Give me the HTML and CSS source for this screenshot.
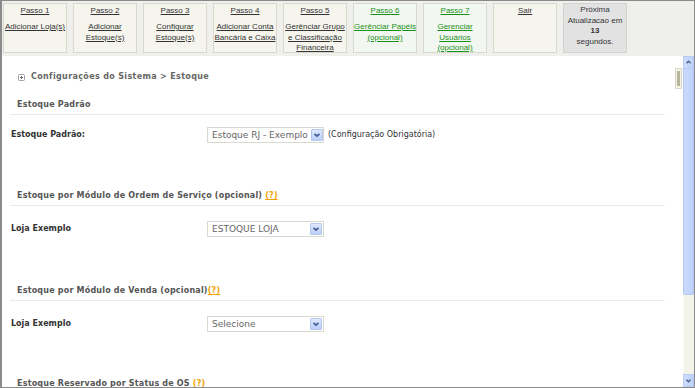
FILE: index.html
```html
<!DOCTYPE html>
<html lang="pt-BR">
<head>
<meta charset="utf-8">
<title>Configurações do Sistema - Estoque</title>
<link rel="stylesheet" href="styles.css">
</head>
<body>
<div class="frame">
  <div class="topbar">
    <div class="step"><a class="lnk">Passo 1</a><div class="desc"><a class="lnk">Adicionar Loja(s)</a></div></div>
    <div class="step"><a class="lnk">Passo 2</a><div class="desc"><a class="lnk">Adicionar<br>Estoque(s)</a></div></div>
    <div class="step"><a class="lnk">Passo 3</a><div class="desc"><a class="lnk">Configurar<br>Estoque(s)</a></div></div>
    <div class="step"><a class="lnk">Passo 4</a><div class="desc"><a class="lnk">Adicionar Conta<br>Bancária e Caixa</a></div></div>
    <div class="step"><a class="lnk">Passo 5</a><div class="desc"><a class="lnk">Gerênciar Grupo<br>e Classificação<br>Financeira</a></div></div>
    <div class="step green"><a class="lnk">Passo 6</a><div class="desc"><a class="lnk">Gerênciar Papéis<br>(opcional)</a></div></div>
    <div class="step green"><a class="lnk">Passo 7</a><div class="desc"><a class="lnk">Gerenciar<br>Usuários<br>(opcional)</a></div></div>
    <div class="step"><a class="lnk">Sair</a></div>
    <div class="step timer">Próxima<br>Atualizacao em<br><b>13</b><br>segundos.</div>
  </div>
  <div class="body">
    <div class="main">
      <div class="crumb">
        <svg class="crumb-ico" width="7" height="7" viewBox="0 0 7 7"><rect x="0.5" y="0.5" width="6" height="6" rx="1" fill="#fff" stroke="#a0a0a0"/><path d="M2 3.5h3M3.5 2v3" stroke="#707070" stroke-width="1"/></svg>
        <span>Configurações do Sistema &gt; Estoque</span>
      </div>

      <div class="sec-title s1">Estoque Padrão</div>
      <div class="row r1">
        <div class="label">Estoque Padrão:</div>
        <div class="sel"><span>Estoque RJ - Exemplo</span><span class="arr"><svg width="10" height="10" viewBox="0 0 10 10"><path d="M2.5 3.8L5 6.2L7.5 3.8" fill="none" stroke="#3d5a96" stroke-width="1.6"/></svg></span></div>
        <div class="note">(Configuração Obrigatória)</div>
      </div>

      <div class="sec-title s2">Estoque por Módulo de Ordem de Serviço (opcional) <a class="help">(?)</a></div>
      <div class="row">
        <div class="label">Loja Exemplo</div>
        <div class="sel wide"><span>ESTOQUE LOJA</span><span class="arr"><svg width="10" height="10" viewBox="0 0 10 10"><path d="M2.5 3.8L5 6.2L7.5 3.8" fill="none" stroke="#3d5a96" stroke-width="1.6"/></svg></span></div>
      </div>

      <div class="sec-title s3">Estoque por Módulo de Venda (opcional)<a class="help">(?)</a></div>
      <div class="row">
        <div class="label">Loja Exemplo</div>
        <div class="sel wide"><span>Selecione</span><span class="arr"><svg width="10" height="10" viewBox="0 0 10 10"><path d="M2.5 3.8L5 6.2L7.5 3.8" fill="none" stroke="#3d5a96" stroke-width="1.6"/></svg></span></div>
      </div>

      <div class="sec-title s4">Estoque Reservado por Status de OS <a class="help">(?)</a></div>

      <div class="mini-bar"><span></span></div>
    </div>
    <div class="scroll">
      <div class="sb-btn"><svg width="11" height="11" viewBox="0 0 11 11"><path d="M3 6.5L5.5 4L8 6.5" fill="none" stroke="#4a5f8a" stroke-width="1.6"/></svg></div>
      <div class="sb-thumb"></div>
      <div class="sb-track"></div>
      <div class="sb-btn"><svg width="11" height="11" viewBox="0 0 11 11"><path d="M3 4.5L5.5 7L8 4.5" fill="none" stroke="#4a5f8a" stroke-width="1.6"/></svg></div>
    </div>
  </div>
</div>
</body>
</html>
```

FILE: styles.css
```css
html, body {
  margin: 0;
  padding: 0;
  background: #fff;
}

body {
  width: 695px;
  height: 388px;
  overflow: hidden;
}

.frame {
  width: 695px;
  height: 388px;
  box-sizing: border-box;
  border: 1px solid #8a8a8a;
  border-left-width: 2px;
  display: flex;
  flex-direction: column;
}

/* ---------- top steps bar ---------- */
.topbar {
  height: 55px;
  flex: none;
  box-sizing: border-box;
  background: #efefeb;
  padding: 2px 0 0 1px;
  display: flex;
  gap: 6px;
}

.step {
  width: 64px;
  height: 50px;
  box-sizing: border-box;
  border: 1px solid #d8d8ce;
  background: #f5f5ee;
  text-align: center;
  font: 8px/10.5px "Liberation Sans", Arial, sans-serif;
  color: #333;
  padding-top: 2px;
  white-space: nowrap;
}

.step .lnk {
  color: #333;
  text-decoration: underline;
}

.step .desc {
  margin-top: 5.5px;
}

.step.green {
  background: #f2f8f1;
}

.step.green .lnk {
  color: #1a8f1a;
}

.step.timer {
  background: #e2e2e2;
  border-color: #d2d2d2;
  color: #333;
  padding-top: 1px;
  line-height: 10.6px;
}

/* ---------- body ---------- */
.body {
  flex: 1;
  min-height: 0;
  display: flex;
}

.main {
  flex: 1;
  position: relative;
  overflow: hidden;
  padding: 15px 18px 0 8px;
  background: #fff;
}

.crumb {
  height: 12px;
  display: flex;
  align-items: center;
  padding-left: 8px;
  gap: 6px;
  font: bold 8px/12px "DejaVu Sans", Verdana, sans-serif;
  color: #666;
  letter-spacing: 0.35px;
}

.crumb-ico {
  flex: none;
}

.sec-title {
  padding: 0 0 3px 7px;
  border-bottom: 1px solid #ebebe3;
  font: bold 8px/12px "DejaVu Sans", Verdana, sans-serif;
  color: #555;
  letter-spacing: 0.2px;
}

.sec-title.s1 { margin-top: 16px; }
.sec-title.s2 { margin-top: 47px; }
.sec-title.s3 { margin-top: 48px; }
.sec-title.s4 { margin-top: 46px; }

.help {
  color: #f2a200;
  text-decoration: underline;
}

.row {
  margin-top: 15px;
  height: 16px;
  display: flex;
  align-items: center;
}

.row.r1 {
  margin-top: 12px;
}

.label {
  width: 196px;
  padding-left: 1px;
  flex: none;
  font: bold 8px/12px "DejaVu Sans", Verdana, sans-serif;
  color: #333;
}

.sel {
  width: 117px;
  height: 16px;
  flex: none;
  box-sizing: border-box;
  border: 1px solid #d9d9cf;
  background: #fff;
  display: flex;
  align-items: center;
  padding-left: 4px;
  font: 9px/14px "DejaVu Sans", Verdana, sans-serif;
  color: #666;
  white-space: nowrap;
}

.arr {
  margin-left: auto;
  width: 12px;
  height: 12px;
  box-sizing: border-box;
  border: 1px solid #b3c6ee;
  border-radius: 1px;
  background: linear-gradient(#dfe8fd, #bccff8);
  display: flex;
  align-items: center;
  justify-content: center;
}

.sel.wide .arr {
  margin-right: 1px;
}

.note {
  margin-left: 4px;
  font: 8px/12px "DejaVu Sans", Verdana, sans-serif;
  color: #333;
}

/* small nested scrollbar remnant overlapping the content edge */
.mini-bar {
  position: absolute;
  left: 673px;
  top: 12px;
  width: 7px;
  height: 21px;
  box-sizing: border-box;
  border: 1px solid #d6d6c6;
  background: #f3f3e6;
  border-radius: 1px;
}

.mini-bar span {
  position: absolute;
  left: 1px;
  top: 2px;
  width: 3px;
  height: 15px;
  background: #b5b59c;
}

/* ---------- page scrollbar ---------- */
.scroll {
  width: 11px;
  flex: none;
  display: flex;
  flex-direction: column;
  background: #f4f3ea;
}

.sb-btn {
  height: 13px;
  flex: none;
  box-sizing: border-box;
  border: 1px solid #b8cbf3;
  background: linear-gradient(90deg, #d0defd, #bed0f9);
  display: flex;
  align-items: center;
  justify-content: center;
}

.sb-btn svg {
  display: block;
}

.sb-thumb {
  height: 226px;
  flex: none;
  box-sizing: border-box;
  border: 1px solid #b3c7f2;
  border-top: 0;
  border-radius: 0 0 2px 2px;
  background: linear-gradient(90deg, #cadafd, #bfd1fa);
}

.sb-track {
  flex: 1;
  border-left: 1px solid #fbfaf4;
}
```
